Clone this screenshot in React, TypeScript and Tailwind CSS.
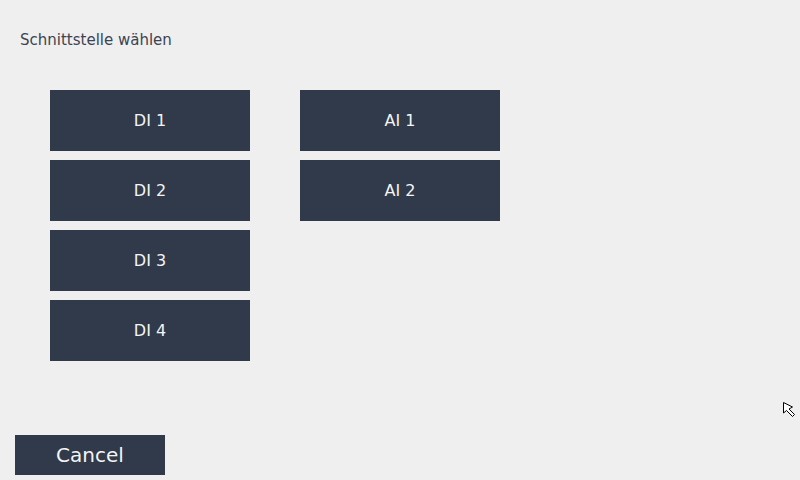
import React from 'react';

const diItems = ['DI 1', 'DI 2', 'DI 3', 'DI 4'];
const aiItems = ['AI 1', 'AI 2'];

const PickButton: React.FC<{ label: string }> = ({ label }) => (
  <button className="flex h-[61px] w-[200px] items-center justify-center bg-[#303a4b] text-[16px] text-[#f4f4f4]">
    {label}
  </button>
);

const App: React.FC = () => {
  return (
    <div
      className="relative flex h-[480px] w-[800px] flex-col overflow-hidden bg-[#efefef]"
      style={{ fontFamily: '"DejaVu Sans", sans-serif' }}
    >
      <div className="pl-[20px] pt-[30px] text-[15px] leading-[20px] text-[#3c4352]">
        Schnittstelle wählen
      </div>

      <div className="flex gap-[50px] pl-[50px] pt-[40px]">
        <div className="flex flex-col gap-[9px]">
          {diItems.map(item => (
            <PickButton key={item} label={item} />
          ))}
        </div>
        <div className="flex flex-col gap-[9px]">
          {aiItems.map(item => (
            <PickButton key={item} label={item} />
          ))}
        </div>
      </div>

      <div className="mt-auto pb-[5px] pl-[15px]">
        <button className="flex h-[40px] w-[150px] items-center justify-center bg-[#303a4b] text-[20px] text-[#f4f4f4]">
          Cancel
        </button>
      </div>

      {/* mouse pointer left on screen */}
      <svg className="absolute left-[782px] top-[401px]" width="16" height="18" viewBox="0 0 16 18">
        <path
          d="M1.5 1.5 L1.5 12 L4.5 9.5 L10.5 15.5 L12.5 13.5 L7 8 L10.5 6 Z"
          fill="#ffffff"
          stroke="#000000"
          strokeWidth="1"
        />
      </svg>
    </div>
  );
};

export default App;
